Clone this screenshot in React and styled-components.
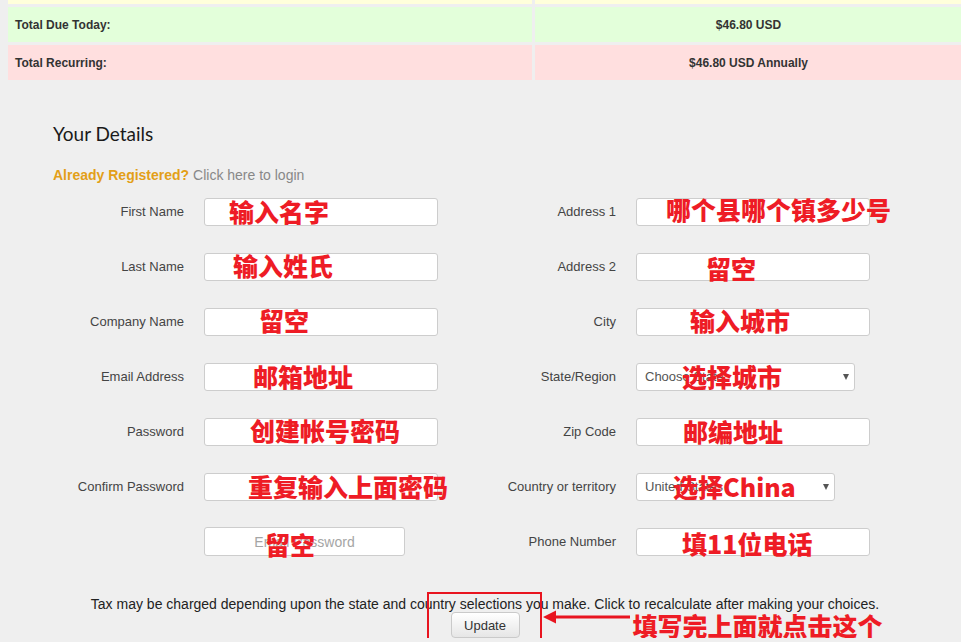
import React from "react";
import styled, { createGlobalStyle } from "styled-components";

const GlobalStyle = createGlobalStyle`
  html, body {
    margin: 0;
    padding: 0;
    background: #efefef;
    overflow: hidden;
  }
  body {
    font-family: "Liberation Sans", Arial, sans-serif;
    color: #333;
  }
`;

const Page = styled.div`
  width: 954px;
  margin-left: 8px;
`;

const Totals = styled.div`
  display: grid;
  grid-template-columns: 524px 1fr;
  grid-auto-rows: 35px;
  gap: 3px;
  margin-top: -31px;
`;

const TotalCell = styled.div`
  display: flex;
  align-items: center;
  justify-content: ${({ center }) => (center ? "center" : "flex-start")};
  padding: 0 7px;
  background: ${({ tone }) =>
    tone === "yellow" ? "#ffffdb" : tone === "green" ? "#e3ffda" : "#ffdfdf"};
  font-size: 12px;
  font-weight: 700;
  color: #333;
`;

const Details = styled.section`
  padding: 40px 45px 0;
`;

const Heading = styled.h2`
  margin: 0;
  font-family: Lato, "Open Sans", sans-serif;
  font-weight: 400;
  font-size: 19px;
  line-height: 28px;
  color: #1a1a1a;
`;

const LoginLine = styled.p`
  margin: 19px 0 0;
  font-size: 14px;
  line-height: 16px;
  color: #888;
`;

const Registered = styled.span`
  color: #e39f18;
  font-weight: 700;
`;

const Fields = styled.div`
  display: grid;
  grid-template-columns: 1fr 1fr;
  margin-top: 1px;
`;

const Column = styled.div`
  display: flex;
  flex-direction: column;
`;

const Row = styled.div`
  display: grid;
  grid-template-columns: 131px auto;
  column-gap: 20px;
  align-items: center;
  height: 55px;
`;

const Label = styled.label`
  text-align: right;
  font-size: 13px;
  color: #444;
`;

const Slot = styled.div`
  position: relative;
  width: ${({ w }) => w}px;
`;

const TextInput = styled.input`
  box-sizing: border-box;
  display: block;
  width: 100%;
  height: ${({ tall }) => (tall ? 29 : 28)}px;
  border: 1px solid #cdcdcd;
  border-radius: 3px;
  background: #fff;
  font-family: "Liberation Sans", Arial, sans-serif;
  font-size: ${({ tall }) => (tall ? 14 : 13)}px;
  text-align: ${({ tall }) => (tall ? "center" : "left")};
  padding: 0 8px;
  &::placeholder {
    color: #a5a5a5;
  }
`;

const Select = styled.select`
  box-sizing: border-box;
  display: block;
  width: 100%;
  height: 28px;
  border: 1px solid #cdcdcd;
  border-radius: 3px;
  background: #fff;
  appearance: none;
  font-family: "Liberation Sans", Arial, sans-serif;
  font-size: 13px;
  color: #555;
  padding: 0 8px;
`;

const Caret = styled.span`
  position: absolute;
  right: 6px;
  top: 50%;
  transform: translateY(-50%);
  width: 0;
  height: 0;
  border-left: 3.5px solid transparent;
  border-right: 3.5px solid transparent;
  border-top: 6px solid #555;
  pointer-events: none;
`;

const Note = styled.span`
  position: absolute;
  left: ${({ x }) => x}px;
  top: 50%;
  transform: translateY(calc(-50% + ${({ dy }) => (dy || 0) - 2}px));
  font-family: "Noto Sans CJK SC", "Noto Sans", sans-serif;
  font-weight: 900;
  font-size: 25px;
  line-height: 28px;
  color: #ee1c25;
  white-space: nowrap;
  pointer-events: none;
`;

const Footer = styled.div`
  display: flex;
  flex-direction: column;
  align-items: center;
  margin-top: 27px;
`;

const TaxNote = styled.p`
  margin: 0;
  font-size: 14px;
  line-height: 16px;
  color: #222;
`;

const ButtonSlot = styled.div`
  position: relative;
`;

const UpdateButton = styled.button`
  box-sizing: border-box;
  width: 69px;
  height: 26px;
  border: 1px solid #cacaca;
  border-radius: 4px;
  background: linear-gradient(#ffffff, #e6e6e6);
  font-family: "Liberation Sans", Arial, sans-serif;
  font-size: 13px;
  color: #333;
  padding: 0;
`;

const Frame = styled.div`
  position: absolute;
  left: -24px;
  top: -20px;
  width: 115px;
  height: 48px;
  box-sizing: border-box;
  border: 2px solid #e8141f;
  pointer-events: none;
`;

const Arrow = styled.svg`
  position: absolute;
  left: 91px;
  top: -3px;
  pointer-events: none;
`;

const leftFields = [
  { label: "First Name", note: "输入名字", x: 25, dy: 1 },
  { label: "Last Name", note: "输入姓氏", x: 29 },
  { label: "Company Name", note: "留空", x: 55 },
  { label: "Email Address", note: "邮箱地址", x: 49, dy: 1 },
  { label: "Password", note: "创建帐号密码", x: 46, type: "password" },
  { label: "Confirm Password", note: "重复输入上面密码", x: 44, dy: 1, type: "password" },
];

const rightFields = [
  { label: "Address 1", note: "哪个县哪个镇多少号", x: 30, dy: -1 },
  { label: "Address 2", note: "留空", x: 70, dy: 3 },
  { label: "City", note: "输入城市", x: 54 },
  { label: "State/Region", note: "选择城市", x: 46, dy: 1, select: "Choose State", w: 219 },
  { label: "Zip Code", note: "邮编地址", x: 47, dy: 1 },
  { label: "Country or territory", note: "选择China", x: 37, dy: 1, select: "United States", w: 199 },
  { label: "Phone Number", note: "填11位电话", x: 46, dy: 3 },
];

const Field = ({ label, note, x, dy, type, select, w = 234 }) => (
  <Row>
    <Label>{label}</Label>
    <Slot w={w}>
      {select ? (
        <>
          <Select defaultValue={select}>
            <option>{select}</option>
          </Select>
          <Caret />
        </>
      ) : (
        <TextInput type={type || "text"} />
      )}
      <Note x={x} dy={dy}>{note}</Note>
    </Slot>
  </Row>
);

export default function App() {
  return (
    <Page>
      <GlobalStyle />
      <Totals>
        <TotalCell tone="yellow" />
        <TotalCell tone="yellow" center />
        <TotalCell tone="green">Total Due Today:</TotalCell>
        <TotalCell tone="green" center>$46.80 USD</TotalCell>
        <TotalCell tone="pink">Total Recurring:</TotalCell>
        <TotalCell tone="pink" center>$46.80 USD Annually</TotalCell>
      </Totals>

      <Details>
        <Heading>Your Details</Heading>
        <LoginLine>
          <Registered>Already Registered?</Registered> Click here to login
        </LoginLine>

        <Fields>
          <Column>
            {leftFields.map((f) => (
              <Field key={f.label} {...f} />
            ))}
            <Row>
              <span />
              <Slot w={201}>
                <TextInput tall placeholder="Email Password" />
                <Note x={61} dy={4}>留空</Note>
              </Slot>
            </Row>
          </Column>
          <Column>
            {rightFields.map((f) => (
              <Field key={f.label} {...f} />
            ))}
          </Column>
        </Fields>
      </Details>

      <Footer>
        <TaxNote>
          Tax may be charged depending upon the state and country selections you make. Click to recalculate after making your choices.
        </TaxNote>
        <ButtonSlot>
          <UpdateButton>Update</UpdateButton>
          <Frame />
          <Arrow width="90" height="16" viewBox="0 0 90 16">
            <path d="M1 8 L14 1.5 L14 6.5 L88 6.5 L88 9.5 L14 9.5 L14 14.5 Z" fill="#e8141f" />
          </Arrow>
          <Note x={182} dy={2}>填写完上面就点击这个</Note>
        </ButtonSlot>
      </Footer>
    </Page>
  );
}
